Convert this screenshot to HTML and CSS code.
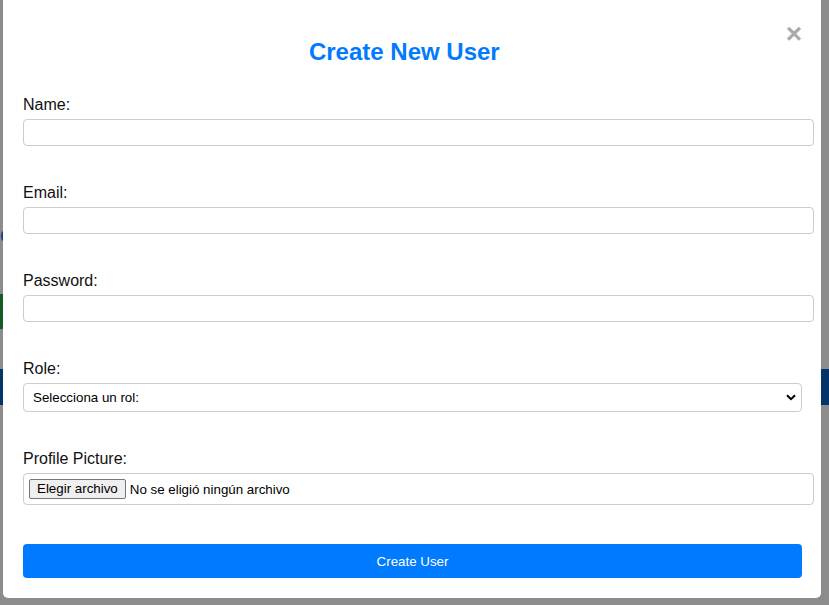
FILE: index.html
```html
<!DOCTYPE html>
<html lang="es">
<head>
<meta charset="utf-8">
<title>Create New User</title>
<link rel="stylesheet" href="styles.css">
</head>
<body>
<div class="page">
  <div class="page-link">e</div>
  <div class="page-btn">&nbsp;</div>
  <div class="page-bar">&nbsp;</div>
</div>
<div class="overlay">
  <div class="modal">
    <span class="close">&times;</span>
    <h2 class="title">Create New User</h2>
    <form class="form">
      <div class="group">
        <label class="label" for="name">Name:</label>
        <input class="input" type="text" id="name">
      </div>
      <div class="group">
        <label class="label" for="email">Email:</label>
        <input class="input" type="email" id="email">
      </div>
      <div class="group">
        <label class="label" for="password">Password:</label>
        <input class="input" type="password" id="password">
      </div>
      <div class="group">
        <label class="label" for="role">Role:</label>
        <select class="select" id="role">
          <option>Selecciona un rol:</option>
        </select>
      </div>
      <div class="group">
        <label class="label" for="pic">Profile Picture:</label>
        <label class="file" for="pic">
          <span class="file-btn">Elegir archivo</span>
          <span class="file-text">No se eligió ningún archivo</span>
          <input class="file-input" type="file" id="pic">
        </label>
      </div>
      <button type="button" class="submit">Create User</button>
    </form>
  </div>
</div>
</body>
</html>
```

FILE: styles.css
```css
* { box-sizing: content-box; }
html, body { margin: 0; padding: 0; height: 100%; }
body {
  font-family: "Liberation Sans", Arial, sans-serif;
  background: #ffffff;
  overflow: hidden;
}
.page {
  height: 605px;
  display: flex;
  flex-direction: column;
}
.page-link {
  margin-top: 224px;
  color: #1a7cf0;
  font-size: 22px;
  font-weight: bold;
  line-height: 22px;
}
.page-btn {
  margin-top: 48px;
  width: 60px;
  height: 35px;
  background: #28a745;
}
.page-bar {
  margin-top: 40px;
  height: 36px;
  background: #0a60c0;
}
.overlay {
  position: fixed;
  inset: 0;
  background: rgba(0, 0, 0, 0.45);
}
.modal {
  background: #ffffff;
  margin: -2px 0 0 3px;
  width: 778px;
  padding: 20px 20px 20px 20px;
  border-radius: 0 0 5px 5px;
}
.close {
  float: right;
  color: #aaaaaa;
  font-size: 28px;
  font-weight: bold;
  line-height: 28px;
  margin-top: 2px;
  margin-right: -1px;
}
.title {
  text-align: center;
  color: #007bff;
  font-size: 24px;
  font-weight: bold;
  margin: 20px 0 30px;
  line-height: 28px;
}
.form { display: flex; flex-direction: column; }
.group { margin-bottom: 38px; display: flex; flex-direction: column; }
.label {
  font-size: 16px;
  color: #111;
  line-height: 18px;
  margin-bottom: 5px;
}
.input {
  font-family: "Liberation Sans", Arial, sans-serif;
  font-size: 13.33px;
  padding: 5px;
  height: 15px;
  border: 1px solid #cccccc;
  border-radius: 4px;
  width: 779px;
  margin: 0;
  outline: none;
}
.select {
  box-sizing: border-box;
  appearance: none;
  -webkit-appearance: none;
  font-family: "Liberation Sans", Arial, sans-serif;
  font-size: 13.33px;
  color: #000;
  height: 29px;
  width: 779px;
  padding: 0 24px 0 9px;
  border: 1px solid #cccccc;
  border-radius: 4px;
  background: #fff url("data:image/svg+xml,%3Csvg xmlns='http://www.w3.org/2000/svg' width='10' height='7' viewBox='0 0 10 7'%3E%3Cpath d='M1 1.2 L5 5.2 L9 1.2' fill='none' stroke='%23000' stroke-width='2'/%3E%3C/svg%3E") no-repeat right 5px center;
  margin: 0;
}
.file {
  display: flex;
  align-items: center;
  width: 779px;
  padding: 5px;
  height: 20px;
  border: 1px solid #cccccc;
  border-radius: 4px;
  font-size: 13.33px;
  color: #000;
  position: relative;
}
.file-btn {
  background: #efefef;
  border: 1px solid #767676;
  border-radius: 2px;
  padding: 0 7px;
  line-height: 18px;
  margin-right: 4px;
}
.file-input {
  position: absolute;
  width: 1px;
  height: 1px;
  opacity: 0;
  overflow: hidden;
}
.group:last-of-type { margin-bottom: 39px; }
.submit {
  font-family: "Liberation Sans", Arial, sans-serif;
  font-size: 13.33px;
  background: #007bff;
  color: #ffffff;
  border: none;
  border-radius: 4px;
  height: 34px;
  width: 779px;
  padding: 0;
  margin: 0;
}
```
